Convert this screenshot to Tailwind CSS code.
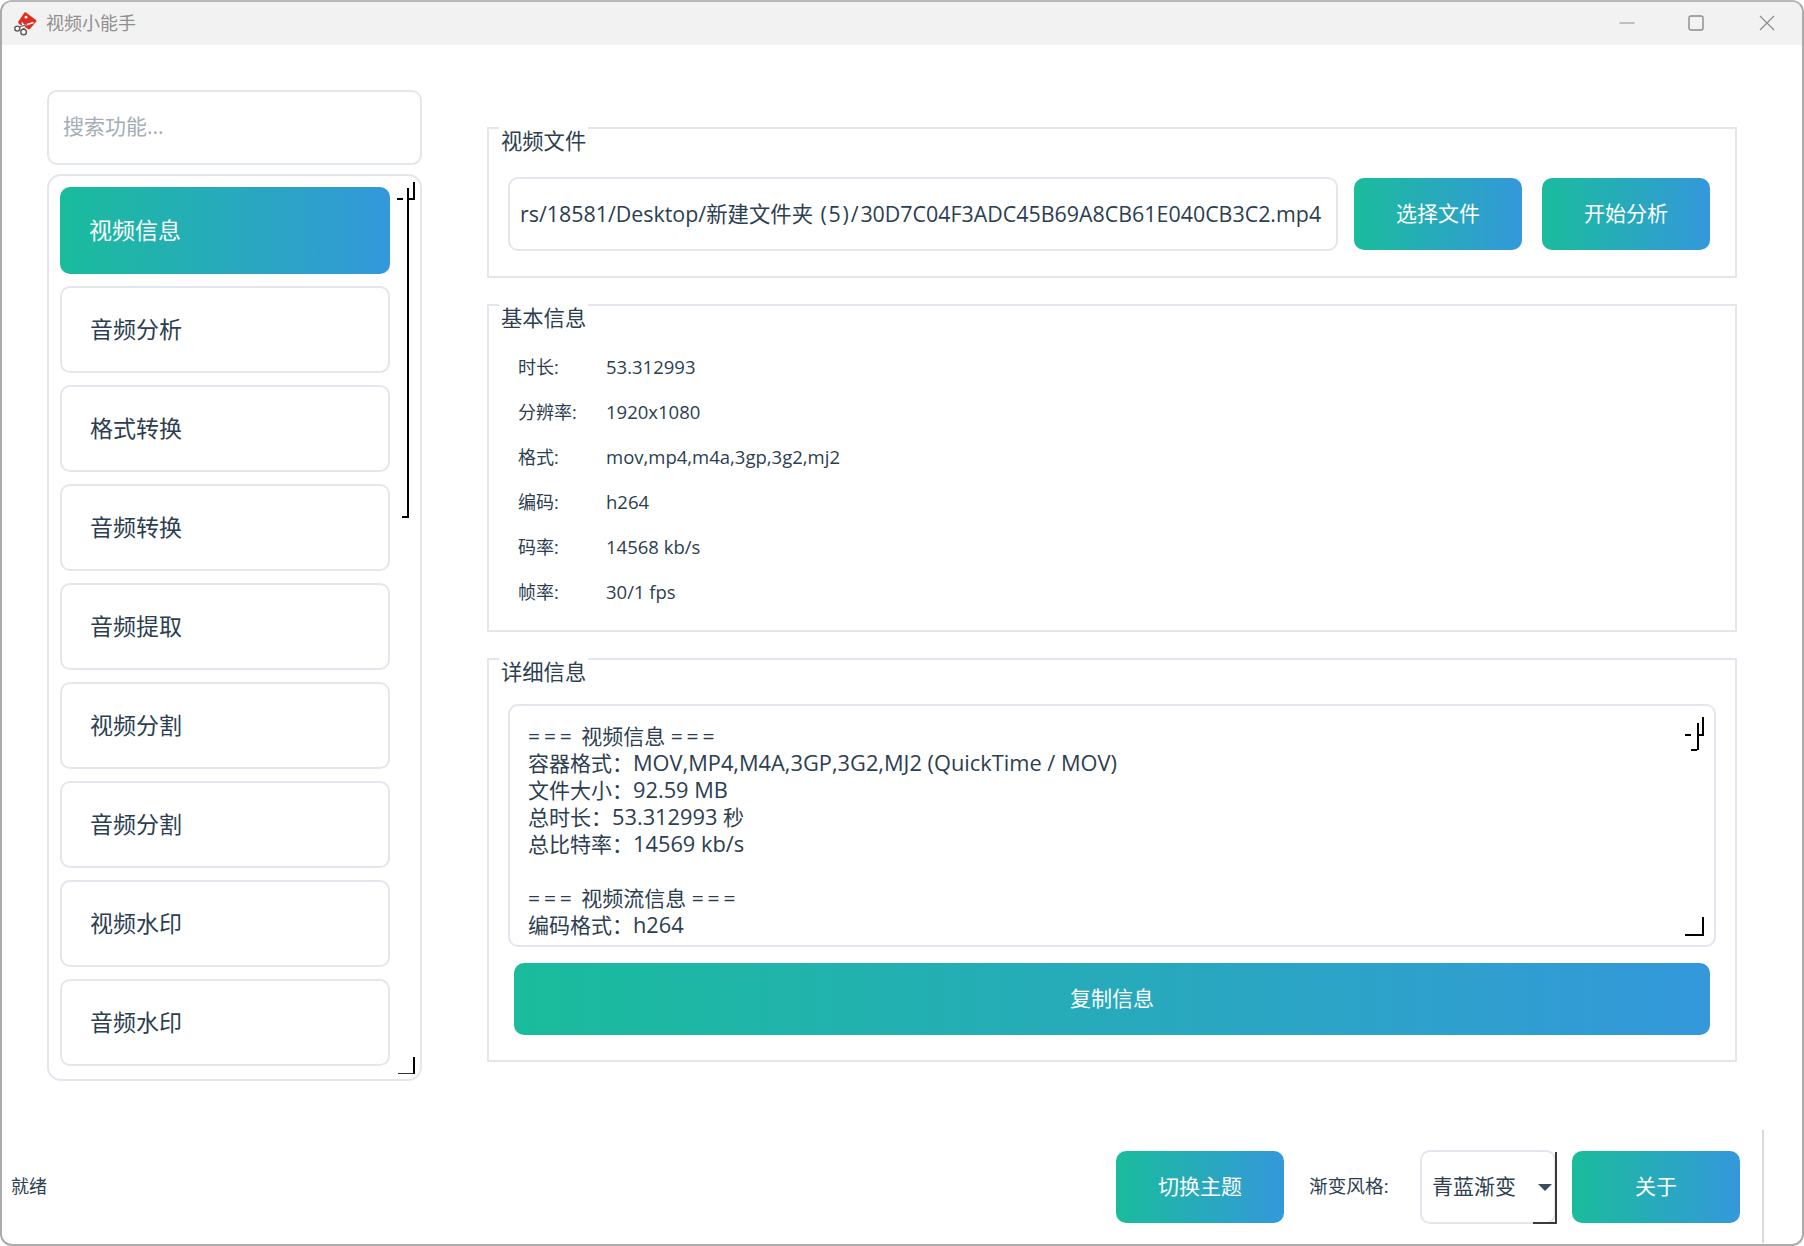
<!DOCTYPE html>
<html lang="zh-CN">
<head>
<meta charset="utf-8">
<title>视频小能手</title>
<script src="https://cdn.jsdelivr.net/npm/@tailwindcss/browser@4"></script>
</head>
<body class="bg-white">
<div class="relative w-[1804px] h-[1246px] flex flex-col overflow-hidden rounded-[12px] border-2 border-[#ababab] border-t-[#b8b8b8] bg-white text-[#2c3e50] font-['Open_Sans','Noto_Sans_CJK_SC',sans-serif]">
  <!-- title bar -->
  <header class="h-[43px] shrink-0 bg-[#f2f2f2] flex items-center pl-[11px]">
    <svg class="w-[24px] h-[24px] shrink-0" viewBox="0 0 24 24">
      <path d="M11.5 0.5 Q12 0 13 0.6 L23 8 Q23.8 8.8 23.2 9.6 L17 17 Q16.4 17.6 15.5 17.2 L6 12 Q4.8 11 5.4 9.6 Z" fill="#e32b1f"/>
      <circle cx="13" cy="5.2" r="1.4" fill="#fff"/>
      <path d="M5 15.5 L20.5 10.5 M9 10.5 L12 17" stroke="#fff" stroke-width="1.7" fill="none"/>
      <path d="M6 15 L14 12.6 M9.5 17 L11.8 16" stroke="#666" stroke-width="1.1" fill="none"/>
      <circle cx="4.3" cy="16.6" r="2.5" fill="#fff" stroke="#5a5a5a" stroke-width="1.4"/>
      <circle cx="10.6" cy="20" r="2.8" fill="#fff" stroke="#5a5a5a" stroke-width="1.4"/>
    </svg>
    <span class="ml-[9px] text-[18px] text-[#8f8f8f]">视频小能手</span>
    <div class="ml-auto flex items-center -translate-y-[1px]">
      <svg class="w-[16px] h-[16px]" viewBox="0 0 16 16"><path d="M0.5 8H15.5" stroke="#8c8c8c" stroke-width="1.2"/></svg>
      <svg class="w-[16px] h-[16px] ml-[53px]" viewBox="0 0 16 16"><rect x="1" y="1" width="14" height="14" rx="2" fill="none" stroke="#8c8c8c" stroke-width="1.4"/></svg>
      <svg class="w-[16px] h-[16px] ml-[55px] mr-[27px]" viewBox="0 0 16 16"><path d="M1 1L15 15M15 1L1 15" stroke="#8c8c8c" stroke-width="1.2"/></svg>
    </div>
  </header>

  <!-- main -->
  <main class="flex pl-[45px]">
    <!-- sidebar -->
    <aside class="w-[375px] shrink-0 pt-[45px] flex flex-col gap-[9px]">
      <div class="h-[75px] rounded-[10px] border-2 border-[#e3e6ec] flex items-center pl-[14px] pb-[1px] text-[21px] text-[#a5adb7]">搜索功能...</div>
      <div class="relative h-[907px] rounded-[14px] border-2 border-[#e3e6ec] pt-[11px] pl-[11px] flex flex-col gap-[12px]">
        <div class="w-[330px] h-[87px] rounded-[10px] bg-linear-to-r/srgb from-[#1abc9c] to-[#3498db] flex items-center pl-[29px] text-[23px] text-white">视频信息</div>
        <div class="w-[330px] h-[87px] rounded-[10px] border-2 border-[#e3e6ec] flex items-center pl-[28px] text-[23px]">音频分析</div>
        <div class="w-[330px] h-[87px] rounded-[10px] border-2 border-[#e3e6ec] flex items-center pl-[28px] text-[23px]">格式转换</div>
        <div class="w-[330px] h-[87px] rounded-[10px] border-2 border-[#e3e6ec] flex items-center pl-[28px] text-[23px]">音频转换</div>
        <div class="w-[330px] h-[87px] rounded-[10px] border-2 border-[#e3e6ec] flex items-center pl-[28px] text-[23px]">音频提取</div>
        <div class="w-[330px] h-[87px] rounded-[10px] border-2 border-[#e3e6ec] flex items-center pl-[28px] text-[23px]">视频分割</div>
        <div class="w-[330px] h-[87px] rounded-[10px] border-2 border-[#e3e6ec] flex items-center pl-[28px] text-[23px]">音频分割</div>
        <div class="w-[330px] h-[87px] rounded-[10px] border-2 border-[#e3e6ec] flex items-center pl-[28px] text-[23px]">视频水印</div>
        <div class="w-[330px] h-[87px] rounded-[10px] border-2 border-[#e3e6ec] flex items-center pl-[28px] text-[23px]">音频水印</div>
        <!-- scrollbar glitch marks -->
        <div class="absolute left-[348px] top-[22px] w-[6px] h-[2px] bg-black"></div>
        <div class="absolute left-[358px] top-[12px] w-[2px] h-[330px] bg-black"></div>
        <div class="absolute left-[353px] top-[340px] w-[6px] h-[2px] bg-black"></div>
        <div class="absolute left-[359px] top-[22px] w-[6px] h-[2px] bg-black"></div>
        <div class="absolute left-[364px] top-[6px] w-[2px] h-[18px] bg-black"></div>
        <div class="absolute left-[349px] top-[897px] w-[16px] h-[1px] bg-[#333]"></div>
        <div class="absolute left-[364px] top-[881px] w-[2px] h-[17px] bg-black"></div>
      </div>
    </aside>

    <!-- right column -->
    <section class="w-[1250px] ml-[65px] pt-[82px] flex flex-col gap-[26px]">
      <!-- file group -->
      <div class="relative h-[151px] border-2 border-[#e3e6ec] pl-[19px] pr-[25px] pt-[48px]">
        <span class="absolute left-[10px] top-[-2px] bg-white px-[2px] h-[26px] leading-[28px] text-[21.3px]">视频文件</span>
        <div class="flex items-start">
          <div class="w-[830px] h-[74px] rounded-[10px] border-2 border-[#e3e6ec] flex items-center overflow-hidden pl-[10px] text-[21.4px] whitespace-pre"><span>rs/18581/Desktop/新建文件夹<span class="tracking-[1.8px]"> (5)/</span>30D7C04F3ADC45B69A8CB61E040CB3C2.mp4</span></div>
          <button class="mt-[1px] ml-[16px] w-[168px] h-[72px] rounded-[10px] bg-linear-to-r/srgb from-[#1abc9c] to-[#3498db] text-white text-[21px]">选择文件</button>
          <button class="mt-[1px] ml-[20px] w-[168px] h-[72px] rounded-[10px] bg-linear-to-r/srgb from-[#1abc9c] to-[#3498db] text-white text-[21px]">开始分析</button>
        </div>
      </div>

      <!-- basic info group -->
      <div class="relative h-[328px] border-2 border-[#e3e6ec] pl-[29px] pt-[39px] text-[18px]">
        <span class="absolute left-[10px] top-[-2px] bg-white px-[2px] h-[26px] leading-[28px] text-[21.3px]">基本信息</span>
        <div class="flex items-center h-[45px]"><span class="w-[88px]">时长:</span><span class="text-[18.5px] pb-[2px]">53.312993</span></div>
        <div class="flex items-center h-[45px]"><span class="w-[88px]">分辨率:</span><span class="text-[18.5px] pb-[2px]">1920x1080</span></div>
        <div class="flex items-center h-[45px]"><span class="w-[88px]">格式:</span><span class="text-[18.5px] pb-[2px]">mov,mp4,m4a,3gp,3g2,mj2</span></div>
        <div class="flex items-center h-[45px]"><span class="w-[88px]">编码:</span><span class="text-[18.5px] pb-[2px]">h264</span></div>
        <div class="flex items-center h-[45px]"><span class="w-[88px]">码率:</span><span class="text-[18.5px] pb-[2px]">14568 kb/s</span></div>
        <div class="flex items-center h-[45px]"><span class="w-[88px]">帧率:</span><span class="text-[18.5px] pb-[2px]">30/1 fps</span></div>
      </div>

      <!-- detail group -->
      <div class="relative h-[404px] border-2 border-[#e3e6ec] pl-[19px] pr-[19px] pt-[44px]">
        <span class="absolute left-[10px] top-[-2px] bg-white px-[2px] h-[26px] leading-[28px] text-[21.3px]">详细信息</span>
        <div class="relative w-[1208px] h-[243px] rounded-[10px] border-2 border-[#e3e6ec] pl-[18px] pt-[17px] text-[21px] leading-[27px] overflow-hidden">
          <div class="h-[27px]"><span class="tracking-[3.9px]">===</span> 视频信息 <span class="tracking-[3.9px]">===</span></div>
          <div class="h-[27px] -translate-y-[1px]">容器格式：<span class="text-[21.8px]">MOV,MP4,M4A,3GP,3G2,MJ2 (QuickTime / MOV)</span></div>
          <div class="h-[27px] -translate-y-[1px]">文件大小：<span class="text-[21.8px]">92.59 MB</span></div>
          <div class="h-[27px] -translate-y-[1px]">总时长：<span class="text-[21.8px]">53.312993</span> 秒</div>
          <div class="h-[27px] -translate-y-[1px]">总比特率：<span class="text-[21.8px]">14569 kb/s</span></div>
          <div class="h-[27px]">&nbsp;</div>
          <div class="h-[27px]"><span class="tracking-[3.9px]">===</span> 视频流信息 <span class="tracking-[3.9px]">===</span></div>
          <div class="h-[27px] -translate-y-[1px]">编码格式：<span class="text-[21.8px]">h264</span></div>
          <div class="absolute left-[1175px] top-[28px] w-[6px] h-[2px] bg-black"></div>
          <div class="absolute left-[1187px] top-[17px] w-[2px] h-[27px] bg-black"></div>
          <div class="absolute left-[1181px] top-[43px] w-[6px] h-[2px] bg-black"></div>
          <div class="absolute left-[1187px] top-[28px] w-[7px] h-[2px] bg-black"></div>
          <div class="absolute left-[1192px] top-[11px] w-[2px] h-[18px] bg-black"></div>
          <div class="absolute left-[1175px] top-[228px] w-[19px] h-[2px] bg-black"></div>
          <div class="absolute left-[1192px] top-[211px] w-[2px] h-[18px] bg-black"></div>
        </div>
        <button class="block mt-[16px] ml-[6px] w-[1196px] h-[72px] rounded-[10px] bg-linear-to-r/srgb from-[#1abc9c] to-[#3498db] text-white text-[21px]">复制信息</button>
      </div>
    </section>
  </main>

  <!-- footer -->
  <footer class="absolute left-0 right-0 top-[1128px] h-[113px] flex items-center pl-[9px]">
    <span class="text-[18px]">就绪</span>
    <button class="ml-auto w-[168px] h-[72px] rounded-[10px] bg-linear-to-r/srgb from-[#1abc9c] to-[#3498db] text-white text-[21px]">切换主题</button>
    <span class="ml-[25px] w-[111px] text-[18.7px]">渐变风格:</span>
    <div class="relative w-[136px] h-[74px] rounded-[10px] border-2 border-[#e3e6ec] flex items-center pl-[10px] text-[21px]">
      青蓝渐变
      <div class="absolute left-[116px] top-[32px] w-0 h-0 border-l-[7px] border-r-[7px] border-t-[7px] border-l-transparent border-r-transparent border-t-[#3d4b5f]"></div>
      <div class="absolute left-[133px] top-[0px] w-[2px] h-[72px] bg-[#3a3a3a]"></div>
      <div class="absolute left-[111px] top-[70px] w-[24px] h-[2px] bg-[#3a3a3a]"></div>
    </div>
    <button class="ml-[16px] w-[168px] h-[72px] rounded-[10px] bg-linear-to-r/srgb from-[#1abc9c] to-[#3498db] text-white text-[21px]">关于</button>
    <div class="ml-[22px] mr-[38px] w-[2px] h-[113px] bg-[#d9d9d9]"></div>
  </footer>
</div>
</body>
</html>
